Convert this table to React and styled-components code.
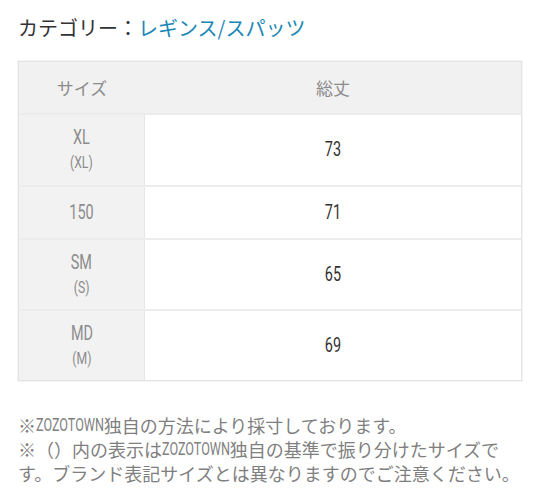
import React from "react";
import styled, { createGlobalStyle } from "styled-components";

const GlobalStyle = createGlobalStyle`
  body {
    margin: 0;
    background: #fff;
    font-family: "Noto Sans CJK JP", sans-serif;
  }
`;

const Page = styled.div`
  width: 540px;
  padding: 12px 18px 0 18px;
  box-sizing: border-box;
`;

const Title = styled.h2`
  margin: 0;
  font-size: 20px;
  font-weight: 400;
  line-height: 32px;
  color: #333;
`;

const CategoryLink = styled.a`
  color: #1b87b4;
  text-decoration: none;
`;

const SizeTable = styled.div`
  margin-top: 17px;
  width: 504px;
  border: 1px solid #e4e4e4;
  box-shadow: 0 0 0 1px #f4f4f4;
  box-sizing: border-box;
`;

const Row = styled.div`
  display: grid;
  grid-template-columns: 126px 1fr;
  box-sizing: border-box;
  height: ${(p) => p.$h}px;
  border-top: ${(p) => (p.$first ? "none" : "2px solid #ececec")};
  background: ${(p) => (p.$head ? "#f1f1f1" : "#fff")};
`;

const Cell = styled.div`
  display: flex;
  flex-direction: column;
  align-items: center;
  justify-content: center;
  background: ${(p) => (p.$label ? "#f2f2f2" : "transparent")};
  border-right: ${(p) => (p.$label ? "1px solid #e6e6e6" : "none")};
  color: ${(p) => (p.$label || p.$head ? "#8c8c8c" : "#333")};
  font-size: 17px;
`;

// narrow latin text (the source font has condensed latin glyphs)
const Narrow = styled.span`
  display: inline-block;
  font-family: Roboto, sans-serif;
  font-size: ${(p) => p.$size || 19.5}px;
  line-height: ${(p) => p.$lh || 26}px;
  transform: scaleX(0.74);
`;

const Notes = styled.div`
  margin-top: 32px;
  font-size: 18px;
  color: #7f7f7f;
`;

const NoteLine = styled.div`
  white-space: nowrap;
  height: 24px;
  line-height: 24px;
`;

const Latin = styled.span`
  display: inline-block;
  font-family: Roboto, sans-serif;
  font-size: 18px;
  line-height: 24px;
  vertical-align: top;
  transform: scaleX(0.7);
  transform-origin: left center;
  margin-right: -29.5px;
`;

const rows = [
  { size: "XL", sub: "(XL)", value: "73", h: 72 },
  { size: "150", value: "71", h: 53 },
  { size: "SM", sub: "(S)", value: "65", h: 71 },
  { size: "MD", sub: "(M)", value: "69", h: 71 },
];

export default function App() {
  return (
    <>
      <GlobalStyle />
      <Page>
        <Title>
          カテゴリー：<CategoryLink href="#">レギンス/スパッツ</CategoryLink>
        </Title>
        <SizeTable>
          <Row $first $head $h={51}>
            <Cell $head>サイズ</Cell>
            <Cell $head>総丈</Cell>
          </Row>
          {rows.map((r) => (
            <Row key={r.size} $h={r.h}>
              <Cell $label>
                <Narrow>{r.size}</Narrow>
                {r.sub && (
                  <Narrow $size={16.5} $lh={24}>
                    {r.sub}
                  </Narrow>
                )}
              </Cell>
              <Cell>
                <Narrow>{r.value}</Narrow>
              </Cell>
            </Row>
          ))}
        </SizeTable>
        <Notes>
          <NoteLine>
            ※<Latin>ZOZOTOWN</Latin>独自の方法により採寸しております。
          </NoteLine>
          <NoteLine>
            ※（）内の表示は<Latin>ZOZOTOWN</Latin>独自の基準で振り分けたサイズで
          </NoteLine>
          <NoteLine>す。ブランド表記サイズとは異なりますのでご注意ください。</NoteLine>
        </Notes>
      </Page>
    </>
  );
}
